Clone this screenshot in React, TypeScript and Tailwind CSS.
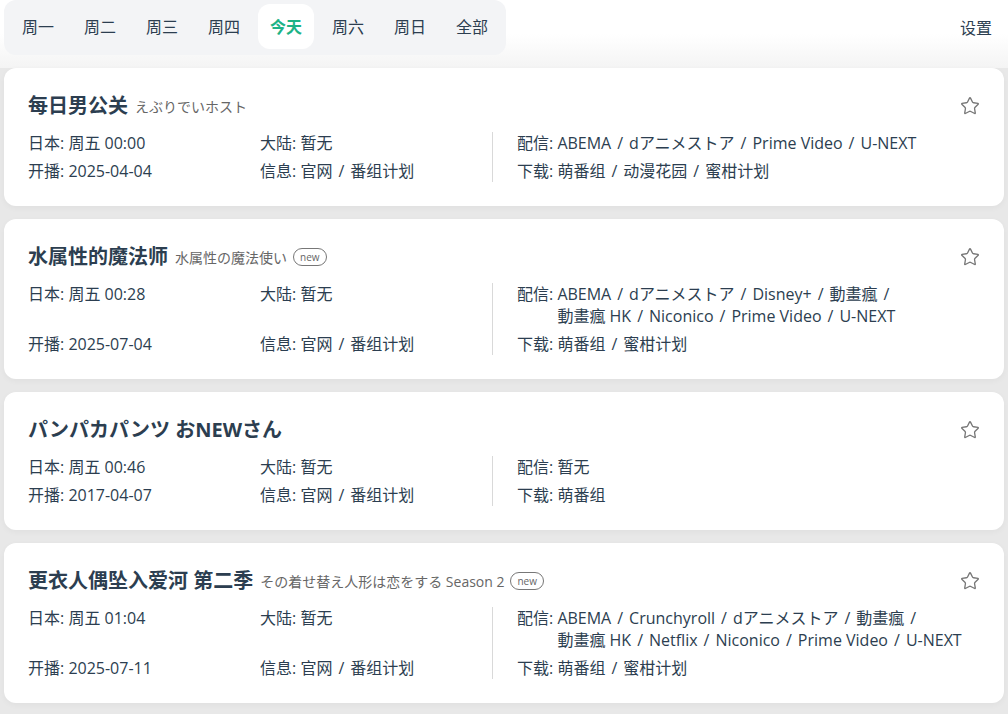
import { Star } from 'lucide-react';

type Anime = {
  title: string;
  subtitle?: string;
  isNew?: boolean;
  jp: string;
  cn: string;
  start: string;
  info: string[];
  stream: string[];
  download: string[];
};

const items: Anime[] = [
  {
    title: '每日男公关',
    subtitle: 'えぶりでいホスト',
    jp: '周五 00:00',
    cn: '暂无',
    start: '2025-04-04',
    info: ['官网', '番组计划'],
    stream: ['ABEMA', 'dアニメストア', 'Prime Video', 'U-NEXT'],
    download: ['萌番组', '动漫花园', '蜜柑计划'],
  },
  {
    title: '水属性的魔法师',
    subtitle: '水属性の魔法使い',
    isNew: true,
    jp: '周五 00:28',
    cn: '暂无',
    start: '2025-07-04',
    info: ['官网', '番组计划'],
    stream: ['ABEMA', 'dアニメストア', 'Disney+', '動畫瘋', '動畫瘋 HK', 'Niconico', 'Prime Video', 'U-NEXT'],
    download: ['萌番组', '蜜柑计划'],
  },
  {
    title: 'パンパカパンツ おNEWさん',
    jp: '周五 00:46',
    cn: '暂无',
    start: '2017-04-07',
    info: ['官网', '番组计划'],
    stream: [],
    download: ['萌番组'],
  },
  {
    title: '更衣人偶坠入爱河 第二季',
    subtitle: 'その着せ替え人形は恋をする Season 2',
    isNew: true,
    jp: '周五 01:04',
    cn: '暂无',
    start: '2025-07-11',
    info: ['官网', '番组计划'],
    stream: ['ABEMA', 'Crunchyroll', 'dアニメストア', '動畫瘋', '動畫瘋 HK', 'Netflix', 'Niconico', 'Prime Video', 'U-NEXT'],
    download: ['萌番组', '蜜柑计划'],
  },
];

const tabs = ['周一', '周二', '周三', '周四', '今天', '周六', '周日', '全部'];

// each link keeps its trailing slash, so a line never starts with "/"
function LinkList({ list }: { list: string[] }) {
  if (list.length === 0) return <span>暂无</span>;
  return (
    <span>
      {list.map((s, i) => (
        <span key={s} className="inline-block align-top whitespace-nowrap">
          {s}
          {i < list.length - 1 && <span className="mx-[6px]">/</span>}
        </span>
      ))}
    </span>
  );
}

function Field({ label, children, className = '' }: { label: string; children: React.ReactNode; className?: string }) {
  return (
    <div className={`flex ${className}`}>
      <span className="shrink-0 whitespace-pre">{label}: </span>
      <div className="min-w-0 max-w-[410px]">{children}</div>
    </div>
  );
}

function Card({ a }: { a: Anime }) {
  return (
    <div className="bg-white rounded-xl shadow-[0_2px_6px_rgba(0,0,0,0.04)] px-6 pt-6 pb-6">
      <div className="flex items-center justify-between h-7">
        <div className="flex items-center min-w-0">
          <span className="text-[20px] font-bold leading-7">{a.title}</span>
          {a.subtitle && <span className="ml-[7px] text-[14px] text-[#666]">{a.subtitle}</span>}
          {a.isNew && (
            <span className="ml-[6px] rounded-full border border-[#777] text-[#666] text-[10px] leading-none px-[6px] h-[18px] flex items-center">
              new
            </span>
          )}
        </div>
        <Star className="w-5 h-5 text-[#777] shrink-0" strokeWidth={1.6} />
      </div>
      <div className="mt-3 grid grid-cols-[232px_232px_1fr] text-[16px] leading-[22px]">
        <Field label="日本" className="pb-[6px]">{a.jp}</Field>
        <Field label="大陆" className="pb-[6px]">{a.cn}</Field>
        <div className="border-l border-[#d9d9d9] pl-6 pb-[6px]">
          <Field label="配信"><LinkList list={a.stream} /></Field>
        </div>
        <Field label="开播">{a.start}</Field>
        <Field label="信息"><LinkList list={a.info} /></Field>
        <div className="border-l border-[#d9d9d9] pl-6">
          <Field label="下载"><LinkList list={a.download} /></Field>
        </div>
      </div>
    </div>
  );
}

export default function App() {
  return (
    <div
      className="min-h-screen bg-[#e8e8e8] text-[#2c3e50]"
      style={{ fontFamily: '"Open Sans", "Noto Sans CJK SC", sans-serif' }}
    >
      <div className="bg-gradient-to-b from-white via-white to-[#f4f4f4] pb-[13px]">
        <div className="flex items-center justify-between px-1">
          <div className="flex gap-[6px] bg-[#f3f4f6] rounded-xl pt-1 pb-1.5 px-1.5">
            {tabs.map(t => (
              <div
                key={t}
                className={`h-[45px] px-3 flex items-center rounded-xl text-[16px] ${
                  t === '今天' ? 'bg-white text-[#1db386] font-bold' : ''
                }`}
              >
                {t}
              </div>
            ))}
          </div>
          <div className="text-[16px] pr-3">设置</div>
        </div>
      </div>
      <div className="flex flex-col gap-[13px] px-1 pb-2">
        {items.map(a => (
          <Card key={a.title} a={a} />
        ))}
      </div>
    </div>
  );
}
